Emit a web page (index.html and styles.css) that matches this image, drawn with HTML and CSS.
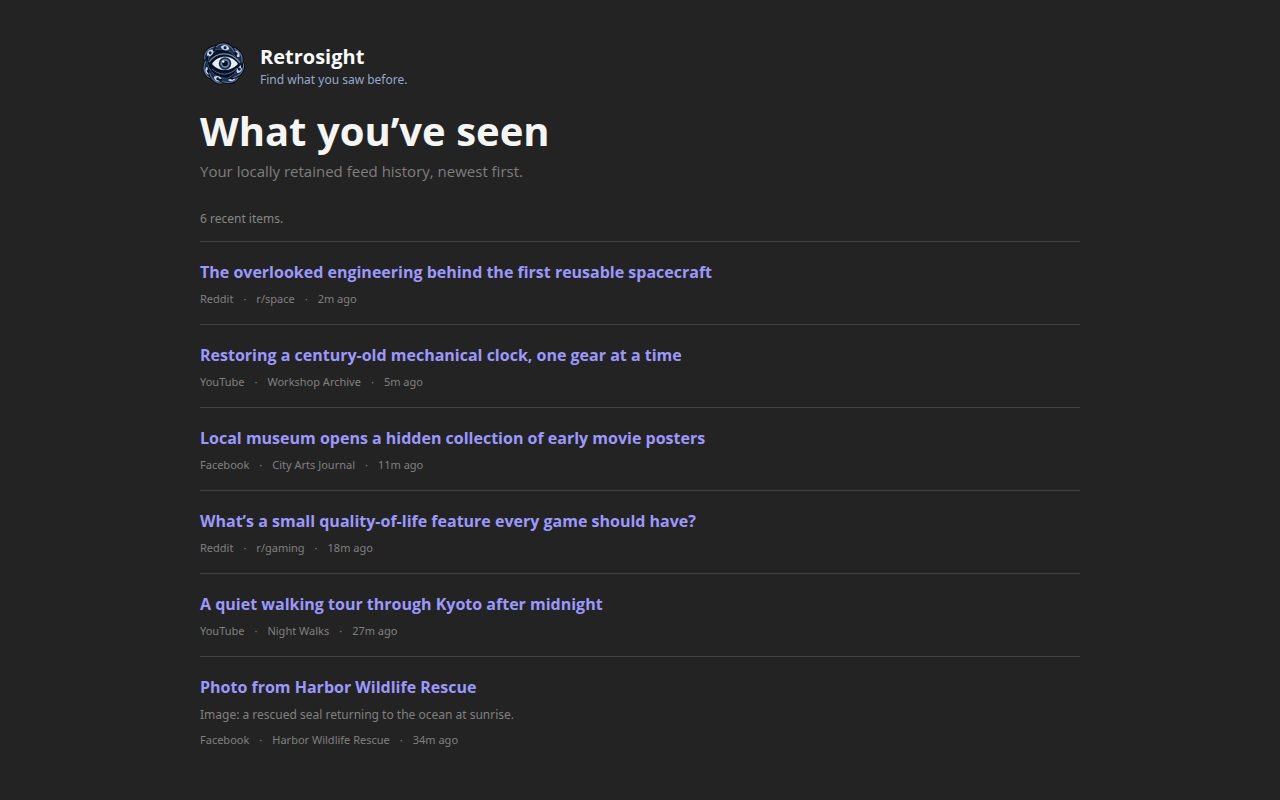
FILE: index.html
```html
<!DOCTYPE html>
<html lang="en">
<head>
  <meta charset="UTF-8">
  <meta name="viewport" content="width=device-width, initial-scale=1">
  <title>Retrosight</title>
  <link rel="stylesheet" href="styles.css">
</head>
<body>
<main class="page">
  <header>
    <div class="brand">
      <svg class="logo" viewBox="0 0 48 48" aria-hidden="true">
        <defs>
          <!-- one woven band with a small eye, repeated around the ring -->
          <g id="band">
            <path d="M-11 5C-10-2-5-5 0-5c6 0 10 4 13 11-4-3-8-4-12-3-4 0-8 1-12 2z" fill="#1c2e50" stroke="#060d1b" stroke-width="1"/>
            <path d="M-9 1C-6-5 4-6 10 2" fill="none" stroke="#5f7596" stroke-width="1"/>
            <path d="M-9 4c5-3 13-3 18 0" fill="none" stroke="#415779" stroke-width=".8"/>
            <path d="M-4.500 0c2-4 7-4 9 0-3 3-6 3-9 0z" fill="#ccd6e6"/>
            <circle cx="0" cy="-.3" r="1.500" fill="#111e3a"/>
          </g>
        </defs>
        <circle cx="24" cy="23.500" r="17" fill="#081022"/>
        <use href="#band" transform="translate(10.500 13) rotate(-48)"/>
        <use href="#band" transform="translate(8.500 31) rotate(-118)"/>
        <use href="#band" transform="translate(18 38.500) rotate(-158)"/>
        <use href="#band" transform="translate(32 38) rotate(150)"/>
        <use href="#band" transform="translate(39 29) rotate(112)"/>
        <use href="#band" transform="translate(36 14) rotate(42)"/>
        <use href="#band" transform="translate(25 8) rotate(12)"/>
        <path d="M8 23c7-12 24-13 33 1-8 14-26 14-33-1z" fill="#081226"/>
        <path d="M9 22c7-10 22-12 31 1" fill="none" stroke="#7489aa" stroke-width="1.200"/>
        <path d="M12 29c7 7 18 7 25-1" fill="none" stroke="#52698d" stroke-width="1"/>
        <path d="M12 24c6-9 19-10 26 0-8 8-19 8-26 0z" fill="#e6edf6"/>
        <circle cx="25" cy="23.500" r="6.200" fill="#14233f"/>
        <circle cx="25" cy="23.500" r="4.700" fill="#5f7fa8"/>
        <circle cx="25" cy="23.500" r="2.800" fill="#050b18"/>
        <circle cx="23.300" cy="21.600" r="1.200" fill="#fff"/>
      </svg>
      <div class="brand-text">
        <div class="brand-name">Retrosight</div>
        <div class="tagline">Find what you saw before.</div>
      </div>
    </div>
    <h1>What you’ve seen</h1>
    <p class="subtitle">Your locally retained feed history, newest first.</p>
  </header>

  <p class="status">6 recent items.</p>

  <ul class="history">
    <li class="item">
      <a class="item-title" href="#">The overlooked engineering behind the first reusable spacecraft</a>
      <div class="meta"><span>Reddit</span><span>r/space</span><span>2m ago</span></div>
    </li>
    <li class="item">
      <a class="item-title" href="#">Restoring a century-old mechanical clock, one gear at a time</a>
      <div class="meta"><span>YouTube</span><span>Workshop Archive</span><span>5m ago</span></div>
    </li>
    <li class="item">
      <a class="item-title" href="#">Local museum opens a hidden collection of early movie posters</a>
      <div class="meta"><span>Facebook</span><span>City Arts Journal</span><span>11m ago</span></div>
    </li>
    <li class="item">
      <a class="item-title" href="#">What’s a small quality-of-life feature every game should have?</a>
      <div class="meta"><span>Reddit</span><span>r/gaming</span><span>18m ago</span></div>
    </li>
    <li class="item">
      <a class="item-title" href="#">A quiet walking tour through Kyoto after midnight</a>
      <div class="meta"><span>YouTube</span><span>Night Walks</span><span>27m ago</span></div>
    </li>
    <li class="item">
      <a class="item-title" href="#">Photo from Harbor Wildlife Rescue</a>
      <p class="description">Image: a rescued seal returning to the ocean at sunrise.</p>
      <div class="meta"><span>Facebook</span><span>Harbor Wildlife Rescue</span><span>34m ago</span></div>
    </li>
  </ul>
</main>
</body>
</html>
```
FILE: styles.css
```css
* { box-sizing: border-box; }

body {
  margin: 0;
  background: #232323;
  color: #f5f5f5;
  font-family: "Segoe UI", "Open Sans", "Noto Sans", sans-serif;
}

.page {
  max-width: 928px;
  margin: 0 auto;
  padding: 40px 24px 32px;
}

.brand {
  display: flex;
  align-items: flex-start;
  gap: 12px;
  margin-bottom: 14px;
}

.logo {
  width: 48px;
  height: 48px;
  flex: none;
}

.brand-text { padding-top: 4px; }

.brand-name {
  font-size: 20px;
  font-weight: 700;
  line-height: 26px;
  color: #f8fafc;
}

.tagline {
  font-size: 12px;
  line-height: 20px;
  color: #94a9cd;
}

.tagline,
.status,
.description,
.meta {
  font-family: "Segoe UI", "Noto Sans", sans-serif;
}

h1 {
  margin: 0;
  font-size: 40px;
  line-height: 54px;
}

.subtitle {
  margin: 0;
  font-size: 15px;
  line-height: 26px;
  color: #7e7e7e;
}

.status {
  margin: 25px 0 12px;
  font-size: 12px;
  line-height: 20px;
  color: #868686;
}

.history {
  list-style: none;
  margin: 0;
  padding: 0;
}

.item {
  padding: 18px 0 16px;
  border-top: 1px solid #434343;
}

.item-title {
  display: block;
  font-size: 16px;
  font-weight: 700;
  line-height: 24px;
  color: #9c98ff;
  text-decoration: none;
}

.item-title:hover { text-decoration: underline; }

.description {
  margin: 6px 0 0;
  font-size: 12px;
  line-height: 20px;
  color: #808080;
}

.meta {
  display: flex;
  flex-wrap: wrap;
  margin-top: 6px;
  font-size: 11px;
  line-height: 18px;
  color: #808080;
}

.meta span + span::before {
  content: "·";
  margin: 0 10px;
}
```
